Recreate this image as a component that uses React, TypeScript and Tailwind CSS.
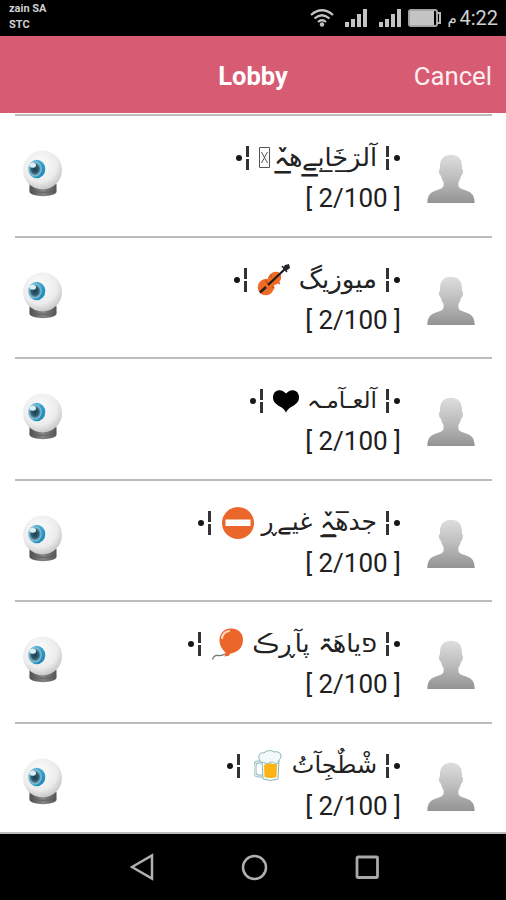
import React from "react";

function Eye() {
  return (
    <svg width="44" height="50" viewBox="0 0 44 50">
      <defs>
        <radialGradient id="ball" cx="0.42" cy="0.35" r="0.65">
          <stop offset="0" stopColor="#fcfcfc" />
          <stop offset="0.7" stopColor="#ececec" />
          <stop offset="1" stopColor="#c9c9c9" />
        </radialGradient>
        <linearGradient id="base" x1="0" y1="0" x2="1" y2="0">
          <stop offset="0" stopColor="#4d4d4d" />
          <stop offset="0.5" stopColor="#858585" />
          <stop offset="1" stopColor="#555" />
        </linearGradient>
        <linearGradient id="iris" x1="0" y1="0" x2="1" y2="1">
          <stop offset="0" stopColor="#7cc4e0" />
          <stop offset="0.6" stopColor="#2d9bc9" />
          <stop offset="1" stopColor="#1c7fab" />
        </linearGradient>
        <radialGradient id="pupil">
          <stop offset="0" stopColor="#1c3d50" />
          <stop offset="0.55" stopColor="#2f5b72" />
          <stop offset="1" stopColor="#9bd3e6" />
        </radialGradient>
      </defs>
      <path d="M8.500 34h27v8c-2 5.500-25 5.500-27 0z" fill="url(#base)" />
      <path d="M8.500 40q13.500 5 27 0" fill="none" stroke="#5a5a5a" strokeWidth="0.700" />
      <circle cx="21.500" cy="20" r="19.500" fill="url(#ball)" />
      <ellipse cx="15.800" cy="19" rx="8.500" ry="9.300" fill="url(#iris)" />
      <ellipse cx="14" cy="19" rx="6.600" ry="7.500" fill="url(#pupil)" />
      <ellipse cx="11.800" cy="15.300" rx="3.200" ry="2.500" fill="#d9f0f7" />
    </svg>
  );
}

function Person() {
  return (
    <svg width="48" height="50" viewBox="0 0 48 50">
      <defs>
        <linearGradient id="person" x1="0" y1="0" x2="0" y2="1">
          <stop offset="0" stopColor="#dedede" />
          <stop offset="0.5" stopColor="#bcbcbc" />
          <stop offset="1" stopColor="#939393" />
        </linearGradient>
      </defs>
      <path
        d="M24 .8c-8 0-11.500 5-11 14-1.600.4-1.300 6 1 7 .5 3 1.300 4.500 2.500 6 .5 5-.3 6.200-4 7.400C4 37.600.5 40 .3 49h47.400c-.2-9-3.700-11.400-12.200-13.800-3.700-1.200-4.500-2.400-4-7.400 1.200-1.500 2-3 2.500-6 2.300-1 2.600-6.600 1-7 .5-9-3-14-11-14z"
        fill="url(#person)"
      />
    </svg>
  );
}

function Tofu() {
  return (
    <svg className="mb-[1px]" width="11" height="21" viewBox="0 0 11 21" fill="none" stroke="#555" strokeWidth="1">
      <path d="M.5.5h10v20H.5zM2.500 5l6 11M8.500 5l-6 11" />
    </svg>
  );
}

function Violin() {
  return (
    <svg width="33" height="32" viewBox="0 0 33 32">
      <g fill="#ee6b26">
        <ellipse cx="9" cy="23" rx="8" ry="8.500" transform="rotate(45 9 23)" />
        <ellipse cx="17.500" cy="14.500" rx="6" ry="7.500" transform="rotate(45 17.500 14.500)" />
        <path d="M10 15l7 8-6 3-5-6z" />
      </g>
      <path d="M8.500 16.500l2.500 3M15 23l2.500 1M13 11l2 2M21 18l2 2" fill="none" stroke="#c94d16" strokeWidth="1.200" />
      <path d="M3 28.500l6-5.500" stroke="#2d1c18" strokeWidth="2.500" />
      <path d="M11 21L28 5" stroke="#1d1a1a" strokeWidth="2.200" />
      <path d="M26 4l2-3 4-1 1 4-4 3z" fill="#24252c" />
      <path d="M25 2l5 6" stroke="#24252c" strokeWidth="1.500" />
    </svg>
  );
}

function Heart() {
  return (
    <svg width="26" height="23" viewBox="0 0 26 23">
      <path d="M13 3.500C10 0 7.500 0 6 .2 2 .8 0 3.500 0 7.500c0 4.500 3 6.800 7 9 3 1.700 5 3.500 6 6.200 1-2.700 3-4.500 6-6.200 4-2.200 7-4.500 7-9 0-4-2-6.700-6-7.300-1.500-.2-4-.2-7 3.300z" fill="#000" />
    </svg>
  );
}

function NoEntry() {
  return (
    <svg width="32" height="32" viewBox="0 0 32 32">
      <circle cx="16" cy="16" r="16" fill="#eb662b" />
      <path d="M3.500 12.500h25v6.500h-25z" fill="#fff" />
    </svg>
  );
}

function Balloon() {
  return (
    <svg width="32" height="33" viewBox="0 0 32 33">
      <path d="M13 26q-3 2-7 1.500-4-.5-5.500 4" fill="none" stroke="#777" strokeWidth="1.300" />
      <path d="M19 .5C11 .5 7 7 7.500 13c.4 6 4 9 6 12l-1 3.500 4.500-.8 1-2C26 24 31 20 31 11.500 31 5 26 .5 19 .5z" fill="#eb662b" />
      <path d="M10 10q1-6 7-7" fill="none" stroke="#ffd8c2" strokeWidth="2.200" strokeLinecap="round" />
    </svg>
  );
}

function Beer() {
  return (
    <svg width="28" height="32" viewBox="0 0 28 32">
      <path d="M8 12H4q-3 0-3 4v6q0 4 3 4h5" fill="none" stroke="#8ab5b5" strokeWidth="3" />
      <path d="M8 12H4q-3 0-3 4v6q0 4 3 4h5" fill="none" stroke="#f4fbfa" strokeWidth="1.200" />
      <path d="M8 10h17l-1 19q-8 3-15 0z" fill="#f5fbfa" stroke="#8ab5b5" />
      <path d="M10 15q5-3 9-1h4l-.5 13q-6 2-12 0z" fill="#fcb315" />
      <path d="M6 11C3 6 6 2 10 3c2-3 8-3 10-1 4-1 7 1 7 4 0 4-3 3-3 7-2 2-4-1-6-1-3 0-4 3-7 1-2-1-4 0-5-2z" fill="#f4faf9" stroke="#8ab5b5" />
    </svg>
  );
}

function Bar() {
  return (
    <span className="flex h-6 w-[3px] shrink-0 flex-col justify-between">
      <span className="h-[11px] bg-[#333]" />
      <span className="h-[11px] bg-[#333]" />
    </span>
  );
}

function Dot() {
  return <span className="h-[6px] w-[6px] shrink-0 rounded-full bg-[#171717]" />;
}

type Room = { name: string; icon: React.ReactNode; iconGap: string; barGap: string; size: string };

const rooms: Room[] = [
  { name: "آلڗ̲خَ̲ابے̲هہ̲̌", icon: <Tofu />, iconGap: "w-[8px]", barGap: "w-[10px]", size: "w-[99px] text-[25.500px]" },
  { name: "ميوزيگ", icon: <Violin />, iconGap: "w-[9px]", barGap: "w-[10px]", size: "w-[78px] text-[26px]" },
  { name: "آلعـآمـہ", icon: <Heart />, iconGap: "w-[9px]", barGap: "w-[10px]", size: "w-[69px] text-[23px]" },
  { name: "جد̅ه̲ہ̲̌ غيےڕ", icon: <NoEntry />, iconGap: "w-[8px]", barGap: "w-[11px]", size: "w-[115px] text-[25px]" },
  { name: "פياهَۃ پآڕڪ", icon: <Balloon />, iconGap: "w-[8px]", barGap: "w-[11px]", size: "w-[125px] text-[25.500px]" },
  { name: "شْطٌجِآتُ", icon: <Beer />, iconGap: "w-[10px]", barGap: "w-[14px]", size: "w-[85px] text-[24px]" },
];

function RoomRow({ room }: { room: Room }) {
  return (
    <div className="flex h-[121.600px] shrink-0 items-start border-t-2 border-[#bcbcbc] pl-[6px] pr-[17px]">
      <div className="mt-[34px]">
        <Eye />
      </div>
      <div className="ml-auto mr-[27px] mt-[25px] flex flex-col items-end">
        <div className="flex h-[34px] items-center">
          <Dot />
          <span className="w-[4px]" />
          <Bar />
          <span className={room.barGap} />
          {room.icon}
          <span className={room.iconGap} />
          <span dir="rtl" className={`${room.size} mb-[2px] whitespace-nowrap font-['DejaVu_Sans',sans-serif] leading-[34px] text-[#222]`}>
            {room.name}
          </span>
          <span className="w-[9px]" />
          <Bar />
          <span className="w-[5px]" />
          <Dot />
        </div>
        <div className="-mr-[1px] mt-[7px] h-[32px] text-[26px] leading-[32px] text-[#202020]">[ 2/100 ]</div>
      </div>
      <div className="mt-[38px]">
        <Person />
      </div>
    </div>
  );
}

function Signal() {
  return (
    <svg width="23" height="18" viewBox="0 0 23 18" fill="#c4c4c4">
      <path d="M0 13h4v5H0zM6 10h4v8H6zM12 5h4v13h-4zM18 0h4v18h-4z" />
    </svg>
  );
}

export default function App() {
  return (
    <div className="flex h-[900px] w-[506px] flex-col overflow-hidden bg-white font-['Roboto',sans-serif]">
      <div className="flex h-[36px] shrink-0 items-start bg-black pl-[9px] pr-[8px] text-[#d0d0d0]">
        <div className="mt-[1px] text-[11px] font-bold leading-[15.500px]">
          <div>zain SA</div>
          <div>STC</div>
        </div>
        <div className="ml-auto flex h-[36px] items-center">
          <svg width="24" height="18" viewBox="0 0 24 18" fill="none" stroke="#c4c4c4" strokeWidth="2.200">
            <path d="M1 6Q12-3.500 23 6M4.500 9.500q7.500-6.500 15 0M8 13q4-3.500 8 0" />
            <circle cx="12" cy="15.500" r="2.200" fill="#c4c4c4" stroke="none" />
          </svg>
          <span className="w-[11px]" />
          <Signal />
          <span className="w-[11px]" />
          <Signal />
          <span className="w-[6px]" />
          <svg width="33" height="18" viewBox="0 0 33 18">
            <rect x="1" y="1" width="28" height="16" rx="2" fill="none" stroke="#a5a5a5" strokeWidth="2" />
            <rect x="2" y="2" width="24" height="14" fill="#c4c4c4" />
            <path d="M29 4h3v10h-3" fill="none" stroke="#b9b9b9" strokeWidth="2" />
          </svg>
          <span className="w-[6px]" />
          <span className="w-[10px] font-['DejaVu_Sans',sans-serif] text-[15px]">م</span>
          <span className="ml-[2px] text-[20px] leading-[36px]">4:22</span>
        </div>
      </div>
      <div className="grid h-[77px] shrink-0 grid-cols-3 items-center bg-[#d65b73] px-[14px] pt-[3px] text-[25.700px] text-white">
        <span />
        <span className="text-center text-[25.500px] font-bold">Lobby</span>
        <span className="text-right text-[#ffeef0]">Cancel</span>
      </div>
      <div className="flex min-h-0 flex-1 flex-col overflow-hidden pl-[15px] pr-[14px] pt-[1px]">
        {rooms.map((room) => (
          <RoomRow key={room.name} room={room} />
        ))}
      </div>
      <div className="flex h-[68px] shrink-0 items-center border-t-2 border-[#bcbcbc] bg-black pl-[130px]">
        <svg width="25" height="28" viewBox="0 0 25 28" fill="none" stroke="#b0b0b0" strokeWidth="2.500">
          <path d="M2 14L22 2.500v23z" />
        </svg>
        <svg className="ml-[86px]" width="27" height="27" viewBox="0 0 27 27" fill="none" stroke="#b0b0b0" strokeWidth="2.500">
          <circle cx="13.500" cy="13.500" r="11.500" />
        </svg>
        <svg className="ml-[87px]" width="25" height="25" viewBox="0 0 25 25" fill="none" stroke="#a8a8a8" strokeWidth="2.800">
          <rect x="2" y="2" width="20.500" height="20.500" rx="1" />
        </svg>
      </div>
    </div>
  );
}
